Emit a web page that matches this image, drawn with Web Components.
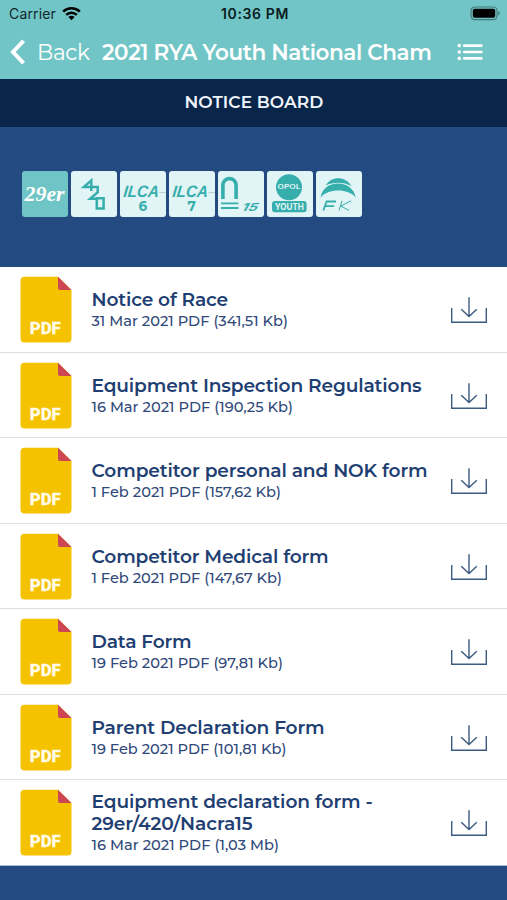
<!DOCTYPE html>
<html lang="en">
<head>
<meta charset="UTF-8">
<meta name="viewport" content="width=device-width, initial-scale=1.0">
<title>Notice Board</title>
<style>
  html, body {
    margin: 0;
    height: 100%;
    overflow: hidden;
    background: #234b82;
    font-family: Montserrat, Inter, "Liberation Sans", sans-serif;
  }
</style>
</head>
<body>
<notice-app></notice-app>

<script>
  // Text line whose tracking is spread so that it fills `width` pixels
  class TrackedText extends HTMLElement {
    constructor() {
      super();
      this.attachShadow({ mode: "open" });
    }

    connectedCallback() {
      this.shadowRoot.innerHTML = /*html*/ `
      <style>
        :host { display: block; white-space: nowrap; }
        span { display: inline-block; }
      </style>
      <span></span>
      `;
      const span = this.shadowRoot.querySelector("span");
      const text = this.getAttribute("text");
      span.textContent = text;
      const width = Number(this.getAttribute("width"));
      if (width) {
        const gap = (width - span.getBoundingClientRect().width) / text.length;
        span.style.letterSpacing = gap.toFixed(3) + "px";
      }
    }
  }
  customElements.define("tracked-text", TrackedText);

  class StatusBar extends HTMLElement {
    constructor() {
      super();
      this.attachShadow({ mode: "open" });
    }

    connectedCallback() {
      this.shadowRoot.innerHTML = /*html*/ `
      <style>
        :host {
          display: grid;
          grid-template-columns: 1fr auto 1fr;
          align-items: center;
          box-sizing: border-box;
          height: 27px;
          padding: 0 6px 0 9px;
          font-family: Inter, sans-serif;
          font-size: 14px;
          color: #10282c;
        }
        .left { display: flex; align-items: center; gap: 6px; }
        .time { font-weight: 600; color: #0a1c20; }
        .battery { justify-self: end; }
        svg { display: block; }
      </style>
      <div class="left">
        <tracked-text text="Carrier" width="47"></tracked-text>
        <svg width="19" height="15" viewBox="0 0 19 15" fill="none" stroke="#000" stroke-width="2.6">
          <path d="M1.2 5.6a12 12 0 0 1 16.6 0"/>
          <path d="M4.2 8.9a7.6 7.6 0 0 1 10.6 0"/>
          <path d="M9.5 14.2L6.4 11a4.4 4.4 0 0 1 6.2 0z" fill="#000" stroke="none"/>
        </svg>
      </div>
      <tracked-text class="time" text="10:36 PM" width="68"></tracked-text>
      <svg class="battery" width="31" height="15" viewBox="0 0 31 15">
        <rect x="1" y="1" width="26" height="12.6" rx="3.6" fill="none" stroke="#44797b" stroke-width="1.2"/>
        <rect x="2.8" y="2.8" width="22.4" height="9" rx="1.8"/>
        <path d="M28.4 5v4.6a2.5 2.5 0 0 0 0-4.6z" fill="#44797b"/>
      </svg>
      `;
    }
  }
  customElements.define("status-bar", StatusBar);

  class NavBar extends HTMLElement {
    constructor() {
      super();
      this.attachShadow({ mode: "open" });
    }

    connectedCallback() {
      this.shadowRoot.innerHTML = /*html*/ `
      <style>
        :host {
          display: flex;
          align-items: center;
          box-sizing: border-box;
          height: 52px;
          padding: 0 24px 2px 9px;
          color: #fff;
          font-size: 21.5px;
          line-height: 28px;
        }
        .back { margin-left: 11px; }
        .title { margin-left: 12.5px; font-weight: 600; }
        .menu { margin-left: auto; }
        svg { display: block; }
      </style>
      <svg width="17" height="26" viewBox="0 0 17 26" fill="none" stroke="#fff" stroke-width="4">
        <path d="M14.6 1.8L4 13l10.600 11.200"/>
      </svg>
      <tracked-text class="back" text="Back" width="52.5"></tracked-text>
      <tracked-text class="title" text="2021 RYA Youth National Cham" width="329.5"></tracked-text>
      <svg class="menu" width="26" height="18" viewBox="0 0 26 18" fill="#fff">
        <circle cx="2.3" cy="2.6" r="1.8"/>
        <circle cx="2.3" cy="9" r="1.8"/>
        <circle cx="2.3" cy="15.4" r="1.8"/>
        <rect x="6" y="1.3" width="19.6" height="2.6" rx="1"/>
        <rect x="6" y="7.7" width="19.6" height="2.6" rx="1"/>
        <rect x="6" y="14.1" width="19.6" height="2.6" rx="1"/>
      </svg>
      `;
    }
  }
  customElements.define("nav-bar", NavBar);

  const ilca = (number) => `
    <path d="M39.500 21.500h6.500" stroke="#b9cfd3" stroke-width="1"/>
    <text transform="translate(3 26.300) skewX(-6)" font-family="Liberation Sans, sans-serif" font-size="16.500" font-weight="700" font-style="italic" textLength="35.500" lengthAdjust="spacingAndGlyphs">ILCA</text>
    <text x="22.700" y="39.800" font-family="Montserrat, sans-serif" font-size="13.500" font-weight="700" text-anchor="middle">${number}</text>`;

  const logos = {
    "29er": `
    <text x="2.600" y="30" font-family="Liberation Serif, serif" font-size="21" font-weight="700" font-style="italic" fill="#fff" textLength="40" lengthAdjust="spacingAndGlyphs">29er</text>`,
    "class420": `
    <g fill="none" stroke="#36aeac" stroke-width="2.500">
      <path d="M20.300 20V9.400L12.800 16h13.900v5.300L19.200 27.800h6.400"/>
      <path d="M25.800 27.300h6.800v10.100h-6.800z"/>
    </g>`,
    "ilca6": ilca(6),
    "ilca7": ilca(7),
    "nacra15": `
    <path d="M4.900 28V14.200a6.600 6.600 0 0 1 13.200 0V28" fill="none" stroke="#36aeac" stroke-width="3.600"/>
    <path d="M3 32.300h17.400M3 37h17.400" stroke="#36aeac" stroke-width="1.800"/>
    <text transform="translate(23 39.600) skewX(-18)" font-size="11" font-weight="700" font-style="italic" textLength="16" lengthAdjust="spacingAndGlyphs">15</text>`,
    "youth": `
    <circle cx="22" cy="16.200" r="13"/>
    <text x="22" y="18.300" font-size="6" font-weight="600" fill="#e3f5f6" text-anchor="middle" textLength="23" lengthAdjust="spacingAndGlyphs">OPOL</text>
    <rect x="5" y="30" width="34.600" height="11.200" rx="3"/>
    <text x="22.300" y="38.700" font-size="8.800" font-weight="700" fill="#e3f5f6" text-anchor="middle" textLength="29" lengthAdjust="spacingAndGlyphs">YOUTH</text>`,
    "fk": `
    <path d="M9.500 14.500C13 9.500 17 7.200 22 7.200s10.500 2.500 13.500 7.800C28 10.600 17 10.600 9.500 14.500z"/>
    <path d="M4.600 26.500C6 17.500 13 12.400 22 12.400S38 17.500 39.800 26.500C35.500 21.800 29.500 19.600 22 19.600S9 21.800 4.600 26.500z"/>
    <g fill="none" stroke="#36aeac">
      <path d="M7.300 39.500L10.600 30.500H20M9 35.200h9" stroke-width="1.800"/>
      <path d="M23 39.500L26 29.800M35 29.800L25 35l8 4.500" stroke-width="1"/>
    </g>`
  };

  class ClassTile extends HTMLElement {
    constructor() {
      super();
      this.attachShadow({ mode: "open" });
    }

    connectedCallback() {
      this.shadowRoot.innerHTML = /*html*/ `
      <style>
        :host {
          display: block;
          width: 46px;
          height: 46px;
          border-radius: 3px;
          background-color: #e1f4f6;
          overflow: hidden;
        }
        :host([active]) { background-color: #6fc5c5; }
        svg { display: block; }
      </style>
      <svg width="46" height="46" viewBox="0 0 46 46" fill="#36aeac" font-family="Inter, sans-serif">
        ${logos[this.getAttribute("logo")]}
      </svg>
      `;
    }
  }
  customElements.define("class-tile", ClassTile);

  class DocumentRow extends HTMLElement {
    constructor() {
      super();
      this.attachShadow({ mode: "open" });
    }

    connectedCallback() {
      this.shadowRoot.innerHTML = /*html*/ `
      <style>
        :host {
          display: flex;
          align-items: center;
          box-sizing: border-box;
          height: 85.5px;
          padding: 1px 19px 0 20px;
          background-color: #fff;
          border-bottom: 1.5px solid #dcdddf;
          color: #1f3f73;
        }
        :host(:last-of-type) { border-bottom-color: #a9bbd2; border-bottom-width: 1px; }
        .info { flex: 1; margin-left: 19.5px; padding-top: 1px; }
        .meta {
          font-size: 14.6px;
          line-height: 20px;
          font-weight: 500;
          color: #30497a;
        }
        svg { display: block; flex: none; }
        .download { margin-top: 1px; }
      </style>
      <svg width="52" height="67" viewBox="0 0 52 67">
        <path d="M4.500 .8H38L51.500 14V62.500a4 4 0 0 1-4 4h-43a4 4 0 0 1-4-4v-57.700a4 4 0 0 1 4-4z" fill="#f5c200"/>
        <path d="M38 .8L51.500 14H40a2 2 0 0 1-2-2z" fill="#cc4653"/>
        <text x="9.800" y="58" font-family="Roboto, sans-serif" font-weight="800" font-size="16.500" fill="#fffbe8" stroke="#fffbe8" stroke-width=".3" textLength="31" lengthAdjust="spacingAndGlyphs">PDF</text>
      </svg>
      <div class="info">
        <slot></slot>
        <tracked-text class="meta" text="${this.getAttribute("meta")}" width="${this.getAttribute("meta-width")}"></tracked-text>
      </div>
      <svg class="download" width="38" height="28" viewBox="0 0 38 28" fill="none" stroke="#3c5b80" stroke-width="1.400">
        <path d="M1.700 12v14.300h34.600V12"/>
        <path d="M19 1.300v19M11.200 13.200l7.800 7.300 7.800-7.300"/>
      </svg>
      `;
    }
  }
  customElements.define("document-row", DocumentRow);

  const documents = [
    { title: [["Notice of Race", 136.5]], meta: ["31 Mar 2021 PDF (341,51 Kb)", 196.5] },
    { title: [["Equipment Inspection Regulations", 330]], meta: ["16 Mar 2021 PDF (190,25 Kb)", 201.5] },
    { title: [["Competitor personal and NOK form", 336]], meta: ["1 Feb 2021 PDF (157,62 Kb)", 189.5] },
    { title: [["Competitor Medical form", 237]], meta: ["1 Feb 2021 PDF (147,67 Kb)", 190.5] },
    { title: [["Data Form", 100]], meta: ["19 Feb 2021 PDF (97,81 Kb)", 191.5] },
    { title: [["Parent Declaration Form", 233]], meta: ["19 Feb 2021 PDF (101,81 Kb)", 195] },
    { title: [["Equipment declaration form -", 281], ["29er/420/Nacra15", 161]], meta: ["16 Mar 2021 PDF (1,03 Mb)", 187.5] }
  ];

  class NoticeApp extends HTMLElement {
    constructor() {
      super();
      this.attachShadow({ mode: "open" });
    }

    connectedCallback() {
      this.shadowRoot.innerHTML = /*html*/ `
      <style>
        :host { display: block; }
        header { background-color: #72c5c6; }
        h1 {
          display: flex;
          align-items: center;
          justify-content: center;
          box-sizing: border-box;
          height: 48px;
          margin: 0;
          padding: 0 0 2px 1px;
          background-color: #0a254a;
          color: #f0f5fb;
          font-size: 17px;
          font-weight: 600;
        }
        .classes {
          display: flex;
          gap: 3px;
          box-sizing: border-box;
          height: 140px;
          padding: 44px 22px;
        }
        .title {
          font-size: 18.6px;
          line-height: 22px;
          font-weight: 600;
        }
      </style>
      <header>
        <status-bar></status-bar>
        <nav-bar></nav-bar>
      </header>
      <h1><tracked-text text="NOTICE BOARD" width="139"></tracked-text></h1>
      <div class="classes">
        ${Object.keys(logos).map((logo, i) => `<class-tile logo="${logo}" ${i === 0 ? "active" : ""}></class-tile>`).join("")}
      </div>
      <main>
        ${documents.map(({ title, meta }) => `
        <document-row meta="${meta[0]}" meta-width="${meta[1]}">
          ${title.map(([text, width]) => `<tracked-text class="title" text="${text}" width="${width}"></tracked-text>`).join("")}
        </document-row>`).join("")}
      </main>
      `;
    }
  }
  customElements.define("notice-app", NoticeApp);
</script>
</body>
</html>
